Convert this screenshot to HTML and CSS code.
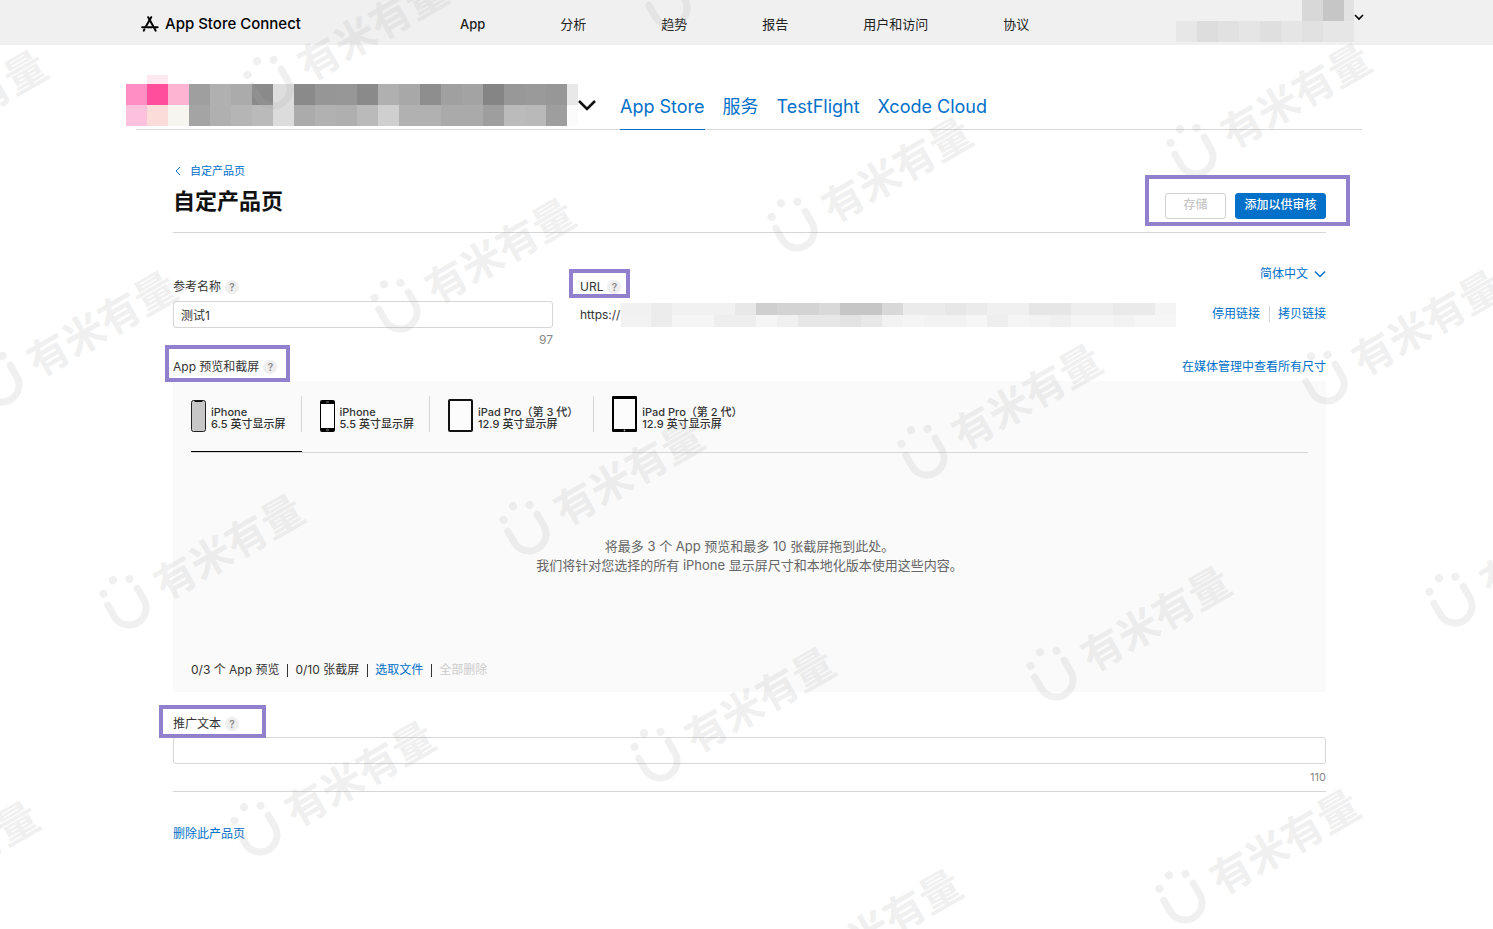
FILE: index.html
```
<!DOCTYPE html>
<html lang="zh-CN">
<head>
    <meta charset="UTF-8">
    <meta name="viewport" content="width=device-width, initial-scale=1.0">
    <title>App Store Connect</title>
    <link rel="stylesheet" href="styles.css">
</head>
<body>

    <header class="topbar">
        <a class="brand" href="#">
            <svg width="18" height="16" viewBox="0 0 18 16" fill="none" stroke="#000" stroke-width="2" stroke-linecap="round">
                <path d="M7.2 1.2 L14.6 14.6"/>
                <path d="M10.2 1.2 L4.6 11"/>
                <path d="M1.2 11.2 H11"/>
                <path d="M14 11.2 H16.6"/>
                <path d="M3.4 13.4 L2.8 14.6"/>
            </svg>
            App Store Connect
        </a>
        <nav class="topnav">
            <a class="current" href="#">App</a>
            <a href="#">分析</a>
            <a href="#">趋势</a>
            <a href="#">报告</a>
            <a href="#">用户和访问</a>
            <a href="#">协议</a>
        </nav>
        <button class="account" type="button" aria-label="账户">
            <span class="account-name"></span>
            <svg width="10" height="8" viewBox="0 0 10 8" fill="none" stroke="#000" stroke-width="1.6"><path d="M1 2 L5 6 L9 2"/></svg>
        </button>
    </header>

    <div class="appbar">
        <button class="app-switch" type="button" aria-label="切换 App">
            <span class="app-name"></span>
            <svg width="20" height="14" viewBox="0 0 20 14" fill="none" stroke="#111" stroke-width="2.6"><path d="M2 2 L10 10 L18 2"/></svg>
        </button>
        <nav class="app-tabs">
            <a class="active" href="#">App Store</a>
            <a href="#">服务</a>
            <a href="#">TestFlight</a>
            <a href="#">Xcode Cloud</a>
        </nav>
    </div>

    <main>
        <a class="back" href="#">
            <svg width="10" height="10" viewBox="0 0 10 10" fill="none" stroke="#0070c9"><path d="M7 1 L3 5 L7 9"/></svg>
            自定产品页
        </a>

        <div class="title-row">
            <h1>自定产品页</h1>
            <div class="actions marked">
                <button class="btn" type="button" disabled>存储</button>
                <button class="btn primary" type="button">添加以供审核</button>
            </div>
        </div>

        <div class="fields">
            <div class="field">
                <div class="label-row">
                    <label for="refName">参考名称</label>
                    <button class="help" type="button">?</button>
                </div>
                <input type="text" id="refName" value="测试1">
                <span class="count">97</span>
            </div>
            <div class="field">
                <div class="label-row marked mark-url">
                    <span>URL</span>
                    <button class="help" type="button">?</button>
                </div>
                <div class="url">
                    <span class="url-text">https://</span>
                    <span class="url-hidden"></span>
                </div>
            </div>
            <div class="side">
                <button class="language" type="button">
                    简体中文
                    <svg width="12" height="8" viewBox="0 0 12 8" fill="none" stroke="#0070c9" stroke-width="1.5"><path d="M1 1.5 L6 6.5 L11 1.5"/></svg>
                </button>
                <div class="url-links">
                    <a href="#">停用链接</a>
                    <a href="#">拷贝链接</a>
                </div>
            </div>
        </div>

        <div class="section-head">
            <div class="label-row marked mark-preview">
                <span>App 预览和截屏</span>
                <button class="help" type="button">?</button>
            </div>
            <a href="#">在媒体管理中查看所有尺寸</a>
        </div>

        <section class="media">
            <div class="devices">
                <button class="device selected" type="button">
                    <svg width="15" height="32" viewBox="0 0 15 32">
                        <rect x="0.5" y="0.5" width="14" height="31" rx="2" fill="#c7c7c7" stroke="#222"/>
                        <path d="M3 0.5 H12 L11 2 H4 Z" fill="#111"/>
                    </svg>
                    <span>iPhone<br>6.5 英寸显示屏</span>
                </button>
                <button class="device" type="button">
                    <svg width="15" height="32" viewBox="0 0 15 32">
                        <rect width="15" height="32" rx="2" fill="#000"/>
                        <rect x="1" y="4" width="13" height="24" fill="#fff"/>
                        <path d="M6 2 H9" stroke="#888"/>
                        <circle cx="7.5" cy="30" r="1" fill="none" stroke="#aaa" stroke-width="0.6"/>
                    </svg>
                    <span>iPhone<br>5.5 英寸显示屏</span>
                </button>
                <button class="device" type="button">
                    <svg width="25" height="33" viewBox="0 0 25 33">
                        <rect x="1" y="1" width="23" height="31" rx="1" fill="#fcfcfc" stroke="#111" stroke-width="2"/>
                    </svg>
                    <span>iPad Pro（第 3 代）<br>12.9 英寸显示屏</span>
                </button>
                <button class="device" type="button">
                    <svg width="25" height="36" viewBox="0 0 25 36">
                        <rect width="25" height="36" rx="1" fill="#000"/>
                        <rect x="2" y="3" width="21" height="30" fill="#fcfcfc"/>
                        <circle cx="12.5" cy="34.5" r="0.9" fill="#aaa"/>
                    </svg>
                    <span>iPad Pro（第 2 代）<br>12.9 英寸显示屏</span>
                </button>
            </div>
            <p class="drop">
                将最多 3 个 App 预览和最多 10 张截屏拖到此处。<br>
                我们将针对您选择的所有 iPhone 显示屏尺寸和本地化版本使用这些内容。
            </p>
            <div class="media-foot">
                <span>0/3 个 App 预览</span>
                <span>0/10 张截屏</span>
                <span><a href="#">选取文件</a></span>
                <span><button class="delete-all" type="button" disabled>全部删除</button></span>
            </div>
        </section>

        <div class="field promo">
            <div class="label-row marked mark-promo">
                <label for="promoText">推广文本</label>
                <button class="help" type="button">?</button>
            </div>
            <input type="text" id="promoText">
            <span class="count">110</span>
        </div>

        <a class="delete-page" href="#">删除此产品页</a>
    </main>

    <!-- watermark -->
    <svg class="watermark" aria-hidden="true">
        <defs>
            <g id="mark">
                <g transform="rotate(-30)">
                    <path d="M-17 -13 V0 A17 17 0 0 0 17 0 V-13" fill="none" stroke="#afafaf" stroke-width="7" stroke-linecap="round"/>
                    <circle cx="-15" cy="-25" r="4"/>
                    <circle cx="0" cy="-32" r="4"/>
                    <circle cx="15" cy="-25" r="4"/>
                    <text x="35" y="12">有米有量</text>
                </g>
            </g>
        </defs>
        <use href="#mark" x="-128" y="164"/>
        <use href="#mark" x="273" y="89"/>
        <use href="#mark" x="670" y="8"/>
        <use href="#mark" x="2" y="385"/>
        <use href="#mark" x="400" y="312"/>
        <use href="#mark" x="797" y="231"/>
        <use href="#mark" x="1196" y="157"/>
        <use href="#mark" x="129" y="608"/>
        <use href="#mark" x="529" y="534"/>
        <use href="#mark" x="927" y="458"/>
        <use href="#mark" x="1327" y="384"/>
        <use href="#mark" x="-136" y="915"/>
        <use href="#mark" x="260" y="835"/>
        <use href="#mark" x="660" y="761"/>
        <use href="#mark" x="1056" y="680"/>
        <use href="#mark" x="1455" y="606"/>
        <use href="#mark" x="787" y="983"/>
        <use href="#mark" x="1185" y="903"/>
    </svg>

</body>
</html>
```
FILE: styles.css
```
* { box-sizing: border-box; }
body { position: relative; margin: 0; min-height: 100vh; background: #fff; color: #333; font-family: Inter, "Noto Sans CJK SC", sans-serif; font-size: 12px; line-height: 16px; }
a { color: #0070c9; text-decoration: none; }
button { padding: 0; border: 0; background: none; font: inherit; color: inherit; cursor: pointer; }
svg { display: block; flex: none; }

/* top bar */
.topbar { display: flex; height: 45px; padding: 0 129px 0 141px; background: #f0f0f0; }
.brand { display: flex; align-items: center; gap: 6px; width: 319px; padding-top: 2px; color: #000; font-size: 15px; font-weight: 500; white-space: nowrap; }
.topnav { display: flex; align-items: center; gap: 75px; padding-top: 3px; font-size: 13px; white-space: nowrap; }
.topnav a { color: #222; }
.topnav .current { font-weight: 500; }
.account { display: flex; align-items: flex-start; margin-left: auto; }
.account svg { margin-top: 13px; }
.account-name {
    width: 178px; height: 42px;
    background:
        linear-gradient(90deg, transparent 0 126px, #d8d8d8 0 147px, #c6c6c6 0 168px, #e2e2e2 0) 0 0 / 100% 21px no-repeat,
        linear-gradient(90deg, #e7e7e7 0 21px, #dddddd 0 42px, #e1e1e1 0 63px, #e5e5e5 0 84px, #dfdfdf 0 105px, #e5e5e5 0 126px, #e1e1e1 0 147px, #e6e6e6 0) 0 21px / 100% 21px no-repeat;
}

/* app bar */
.appbar { display: flex; height: 85px; margin: 0 131px 0 136px; border-bottom: 1px solid #d6d6d6; }
.app-switch { display: flex; align-items: flex-start; width: 494px; margin-left: -10px; padding-top: 30px; }
.app-switch svg { margin-top: 24px; }
.app-name {
    width: 452px; height: 51px; margin-right: -1px;
    background:
        linear-gradient(90deg, transparent 0 21px, #ffe8f0 0 42px, transparent 0) 0 0 / 100% 9px no-repeat,
        linear-gradient(90deg, #ff8ec4 0 21px, #ff4f9c 0 42px, #fdb4d3 0 63px, #9f9f9f 0 84px, #b0b0b0 0 105px, #ababab 0 126px, #8a8a8a 0 147px, #dddddd 0 168px, #8a8a8a 0 189px, #969696 0 210px, #979797 0 231px, #8a8a8a 0 252px, #b0b0b0 0 273px, #a8a8a8 0 294px, #8e8e8e 0 315px, #a0a0a0 0 336px, #a3a3a3 0 357px, #858585 0 378px, #989898 0 399px, #9a9a9a 0 420px, #979797 0 441px, #e8e8e8 0) 0 9px / 100% 21px no-repeat,
        linear-gradient(90deg, #fdc0dd 0 21px, #fcdcd8 0 42px, #f6f5f0 0 63px, #a4a4a4 0 84px, #b0b0b0 0 105px, #b5b5b5 0 126px, #bababa 0 147px, #dcdcdc 0 168px, #ababab 0 189px, #b1b1b1 0 210px, #afafaf 0 231px, #bababa 0 252px, #cfcfcf 0 273px, #b1b1b1 0 315px, #aaaaaa 0 357px, #9e9e9e 0 378px, #bbbbbb 0 399px, #b9b9b9 0 420px, #9e9e9e 0 441px, #fbfbfb 0) 0 30px / 100% 21px no-repeat;
}
.app-tabs { display: flex; gap: 18px; font-size: 18px; line-height: 24px; white-space: nowrap; }
.app-tabs a { height: 85px; padding-top: 50px; }
.app-tabs .active { border-bottom: 1px solid #0070c9; }

/* page */
main { padding: 33px 167px 40px 173px; }
.back { display: flex; align-items: center; gap: 7px; font-size: 11px; }
.title-row { display: flex; justify-content: space-between; align-items: flex-start; margin-top: 7px; padding-bottom: 13px; border-bottom: 1px solid #d6d6d6; }
h1 { margin: 0; color: #111; font-size: 22px; line-height: 30px; font-weight: 700; }
.actions { display: flex; gap: 9px; margin-top: 7px; }
.btn { width: 61px; height: 26px; padding-bottom: 2px; border: 1px solid #d0d0d0; border-radius: 3px; background: #fff; color: #c8c8c8; font-weight: 500; }
.btn.primary { width: 91px; border-color: #0070c9; background: #0070c9; color: #fff; }

.fields { display: grid; grid-template-columns: 380px 1fr auto; column-gap: 27px; margin-top: 33px; }
.field { display: flex; flex-direction: column; }
.fields .field { padding-top: 13px; }
.label-row { display: flex; align-items: center; gap: 4px; align-self: flex-start; }
.help { width: 14px; height: 14px; border-radius: 50%; background: #eee; color: #888; font-size: 10px; line-height: 14px; font-weight: 600; }
input { height: 27px; margin-top: 6px; padding: 0 7px; border: 1px solid #d6d6d6; border-radius: 3px; background: #fff; color: #333; font: inherit; }
.count { align-self: flex-end; margin-top: 4px; color: #888; }
.url { display: flex; align-items: center; margin-top: 8px; }
.url-text { width: 41px; }
.url-hidden {
    width: 555px; height: 24px;
    background:
        linear-gradient(90deg, #f1f1f1 0 30px, #ececec 0 51px, #f1f1f1 0 114px, #e8e8e8 0 135px, #cfcfcf 0 156px, #d3d3d3 0 198px, #d9d9d9 0 219px, #c6c6c6 0 261px, #d8d8d8 0 282px, #ebebeb 0 324px, #e7e7e7 0 345px, #ebebeb 0 366px, #f0f0f0 0 408px, #e6e6e6 0 450px, #eeeeee 0 492px, #eaeaea 0 534px, #f4f4f4 0) 0 0 / 100% 12px no-repeat,
        linear-gradient(90deg, #f2f2f2 0 30px, #ececec 0 51px, #f5f5f5 0 93px, #eeeeee 0 135px, #f5f5f5 0 156px, #f0f0f0 0 177px, #e7e7e7 0 219px, #e3e3e3 0 240px, #e8e8e8 0 261px, #f2f2f2 0 282px, #f5f5f5 0 303px, #f2f2f2 0 345px, #f6f6f6 0 366px, #eeeeee 0 387px, #f5f5f5 0 408px, #f3f3f3 0 429px, #f0f0f0 0 450px, #f5f5f5 0 492px, #f2f2f2 0 513px, #f6f6f6 0) 0 12px / 100% 12px no-repeat;
}
.side { display: flex; flex-direction: column; align-items: flex-end; gap: 24px; }
.language { display: flex; align-items: center; gap: 6px; color: #0070c9; }
.url-links { display: flex; }
.url-links a + a { margin-left: 9px; padding-left: 8px; border-left: 1px solid #d6d6d6; }

.section-head { display: flex; justify-content: space-between; margin-top: 11px; }
.media { margin-top: 6px; padding: 15px 18px 14px; border-radius: 3px; background: #fafafa; }
.devices { display: flex; gap: 18px; padding-bottom: 20px; border-bottom: 1px solid #d6d6d6; }
.device { position: relative; display: flex; align-items: flex-end; gap: 5px; height: 36px; padding-right: 15px; border-right: 1px solid #d6d6d6; font-size: 11px; line-height: 12px; font-weight: 500; text-align: left; white-space: nowrap; }
.device span { padding-bottom: 2px; }
.device:last-child { border-right: 0; }
.device.selected::after { content: ""; position: absolute; left: 0; right: -1px; bottom: -20px; height: 1px; background: #000; }
.drop { margin: 84px 0 87px; color: #666; font-size: 13px; line-height: 19px; text-align: center; }
.media-foot { display: flex; }
.media-foot span + span { margin-left: 8px; padding-left: 8px; background: linear-gradient(#333, #333) 0 2px / 1px 13px no-repeat; }
.delete-all { color: #ccc; }

.promo { margin-top: 24px; padding-bottom: 6px; border-bottom: 1px solid #d6d6d6; }
.promo input { margin-top: 5px; }
.promo .count { margin-top: 5px; font-size: 11px; }
.delete-page { display: inline-block; margin-top: 34px; }

/* highlight frames */
.marked { position: relative; }
.marked::before { content: ""; position: absolute; z-index: 1; border: 4px solid #9180ce; pointer-events: none; }
.actions::before { top: -18px; right: -24px; bottom: -7px; left: -20px; }
.mark-url::before { top: -10px; right: -9px; bottom: -3px; left: -11px; }
.mark-preview::before { top: -14px; right: -13px; bottom: -7px; left: -8px; }
.mark-promo::before { top: -11px; right: -27px; bottom: -6px; left: -14px; }

.watermark { position: absolute; top: 0; left: 0; width: 100%; height: 100%; fill: #afafaf; opacity: 0.18; pointer-events: none; }
.watermark text { font-family: "Noto Sans CJK SC", sans-serif; font-size: 41px; font-weight: 700; }
```
